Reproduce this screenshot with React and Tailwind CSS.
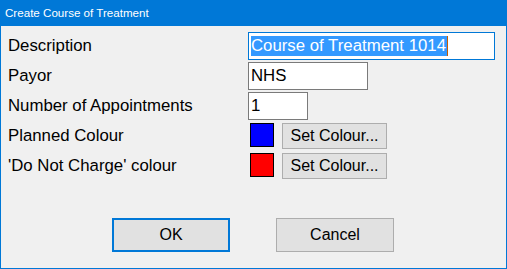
const ROWS = [
  { label: 'Description', h: 'h-[28px]', mt: 'mt-0' },
  { label: 'Payor', h: 'h-[28px]', mt: 'mt-[2px]' },
  { label: 'Number of Appointments', h: 'h-[28px]', mt: 'mt-[2px]' },
  { label: 'Planned Colour', h: 'h-[26px]', mt: 'mt-[3px]' },
  { label: "'Do Not Charge' colour", h: 'h-[26px]', mt: 'mt-[4px]' },
];

function Field({ width, children, focused }) {
  return (
    <div
      className={`h-[28px] ${width} bg-white border ${focused ? 'border-[#0078d7]' : 'border-[#7a7a7a]'} flex items-center pl-[2px] text-[16.8px]`}
    >
      {children}
    </div>
  );
}

function Swatch({ colour }) {
  return (
    <div className="flex items-start gap-[8px] h-[26px] pl-[2px]">
      <div className={`w-[24px] h-[24px] border border-black ${colour}`} />
      <button className="w-[105px] h-[26px] bg-[#e1e1e1] border border-[#adadad] text-[16px] text-black leading-none">
        Set Colour...
      </button>
    </div>
  );
}

function Control({ i }) {
  if (i === 0)
    return (
      <Field width="w-[247px]" focused>
        <span className="bg-[#3399ff] text-white h-[20px] leading-[20px] pr-[1px] border-r border-[#c65d00]">
          Course of Treatment 1014
        </span>
      </Field>
    );
  if (i === 1) return <Field width="w-[120px]">NHS</Field>;
  if (i === 2) return <Field width="w-[60px]">1</Field>;
  if (i === 3) return <Swatch colour="bg-[#0000ff]" />;
  return <Swatch colour="bg-[#ff0000]" />;
}

export default function App() {
  return (
    <div className="w-[507px] h-[269px] bg-[#f0f0f0] border-x border-b border-[#0078d7] flex flex-col font-['Liberation_Sans',Arial,sans-serif] text-[16px] text-black">
      <div className="h-[26px] -mx-px bg-[#0078d7] flex items-center pl-[5px] text-white text-[11.6px]">
        Create Course of Treatment
      </div>
      <div className="flex flex-col pt-[6px] pl-[7px]">
        {ROWS.map((r, i) => (
          <div key={r.label} className={`flex items-center ${r.h} ${r.mt}`}>
            <div className="w-[240px] text-[16.8px]">{r.label}</div>
            <Control i={i} />
          </div>
        ))}
      </div>
      <div className="flex mt-[39px] pl-[111px] gap-[46px]">
        <button className="w-[118px] h-[34px] bg-[#e1e1e1] border-2 border-[#0078d7]">OK</button>
        <button className="w-[118px] h-[34px] bg-[#e1e1e1] border border-[#adadad]">Cancel</button>
      </div>
    </div>
  );
}
